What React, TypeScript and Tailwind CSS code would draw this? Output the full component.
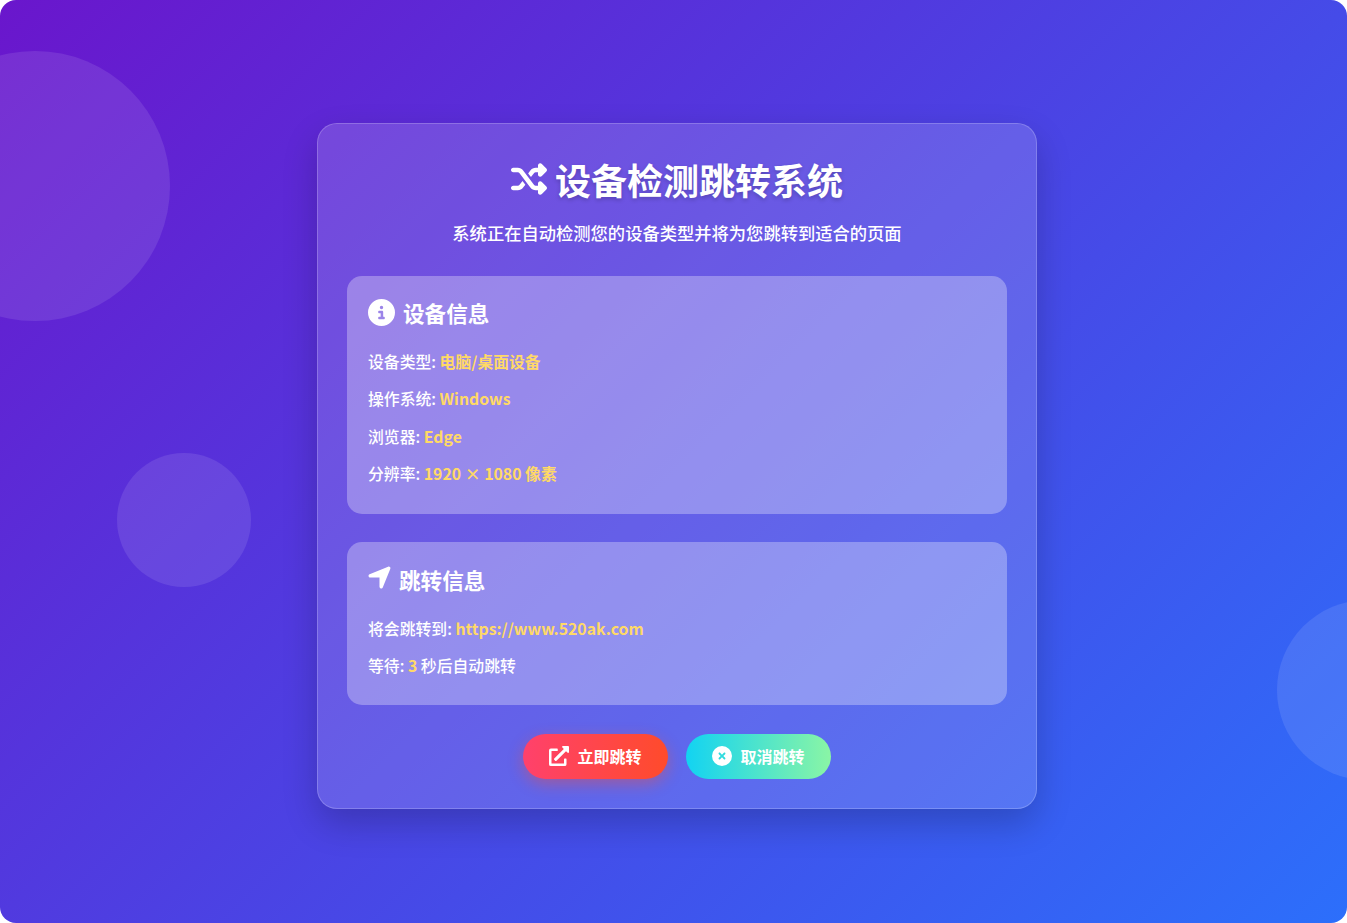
import { FaExternalLinkAlt } from 'react-icons/fa';
import { FaCircleInfo, FaCircleXmark, FaLocationArrow, FaShuffle } from 'react-icons/fa6';

export default function App() {
  return (
    <div className="w-full h-[923px] bg-white font-['Noto_Sans_CJK_SC',sans-serif]">
      <div className="relative w-full h-full overflow-hidden rounded-[16px] bg-[linear-gradient(135deg,#6a16cc_0%,#2c6ffb_100%)] flex items-center justify-center pl-[7px] pt-[9px] text-white">
        {/* background circles */}
        <div className="absolute left-[-100px] top-[51px] w-[270px] h-[270px] rounded-full bg-white/10"></div>
        <div className="absolute left-[117px] top-[453px] w-[134px] h-[134px] rounded-full bg-white/10"></div>
        <div className="absolute left-[1277px] top-[600px] w-[180px] h-[180px] rounded-full bg-white/10"></div>

        <div className="relative w-[720px] h-[686px] p-[29px] rounded-[20px] border border-white/20 bg-white/15 shadow-[0_15px_35px_rgba(0,0,0,0.2)]">
          <h1 className="flex items-center justify-center gap-[7px] pr-[1px] text-[36px] leading-[52px] font-bold [text-shadow:0_2px_4px_rgba(0,0,0,0.2)]">
            <FaShuffle className="w-[38px] h-[36px]" />
            <span>设备检测跳转系统</span>
          </h1>
          <p className="text-center text-[17.3px] leading-[26px] mt-[15px] font-medium">
            系统正在自动检测您的设备类型并将为您跳转到适合的页面
          </p>

          <section className="mt-[30px] h-[238px] px-[21px] pt-[19px] rounded-[15px] bg-white/30">
            <h2 className="flex items-center gap-[8px] text-[21.6px] leading-[36px] font-bold">
              <FaCircleInfo className="w-[27px] h-[27px] mt-[-2px]" />
              <span>设备信息</span>
            </h2>
            <div className="mt-[19px] text-[15.84px] leading-[24px] font-medium flex flex-col gap-[13.3px]">
              <p>设备类型: <span className="text-[#ffd966] font-bold">电脑/桌面设备</span></p>
              <p>操作系统: <span className="text-[#ffd966] font-bold">Windows</span></p>
              <p>浏览器: <span className="text-[#ffd966] font-bold">Edge</span></p>
              <p>分辨率: <span className="text-[#ffd966] font-bold">1920 × 1080 像素</span></p>
            </div>
          </section>

          <section className="mt-[28px] h-[163px] px-[21px] pt-[20px] rounded-[15px] bg-white/30">
            <h2 className="flex items-center gap-[6px] text-[21.6px] leading-[36px] font-bold">
              <FaLocationArrow className="w-[27px] h-[27px] mt-[-6px] ml-[-2px]" />
              <span>跳转信息</span>
            </h2>
            <div className="mt-[19px] text-[15.84px] leading-[24px] font-medium flex flex-col gap-[13.3px]">
              <p>将会跳转到: <span className="text-[#ffd966] font-bold">https://www.520ak.com</span></p>
              <p>等待: <span className="text-[#ffd966] font-bold">3</span> 秒后自动跳转</p>
            </div>
          </section>

          <div className="mt-[29px] flex justify-center gap-[18px]">
            <button className="w-[145px] h-[45px] pb-[2px] flex items-center justify-center gap-[8px] rounded-full font-bold text-[16px] bg-[linear-gradient(90deg,#ff416c,#ff4b2b)] shadow-[0_5px_15px_rgba(255,75,43,0.4)]">
              <FaExternalLinkAlt className="w-[20px] h-[20px]" />
              <span>立即跳转</span>
            </button>
            <button className="w-[145px] h-[45px] pb-[2px] flex items-center justify-center gap-[8px] rounded-full font-bold text-[16px] bg-[linear-gradient(90deg,#12d3f2,#8af5a5)]">
              <FaCircleXmark className="w-[20px] h-[20px]" />
              <span>取消跳转</span>
            </button>
          </div>
        </div>
      </div>
    </div>
  );
}
